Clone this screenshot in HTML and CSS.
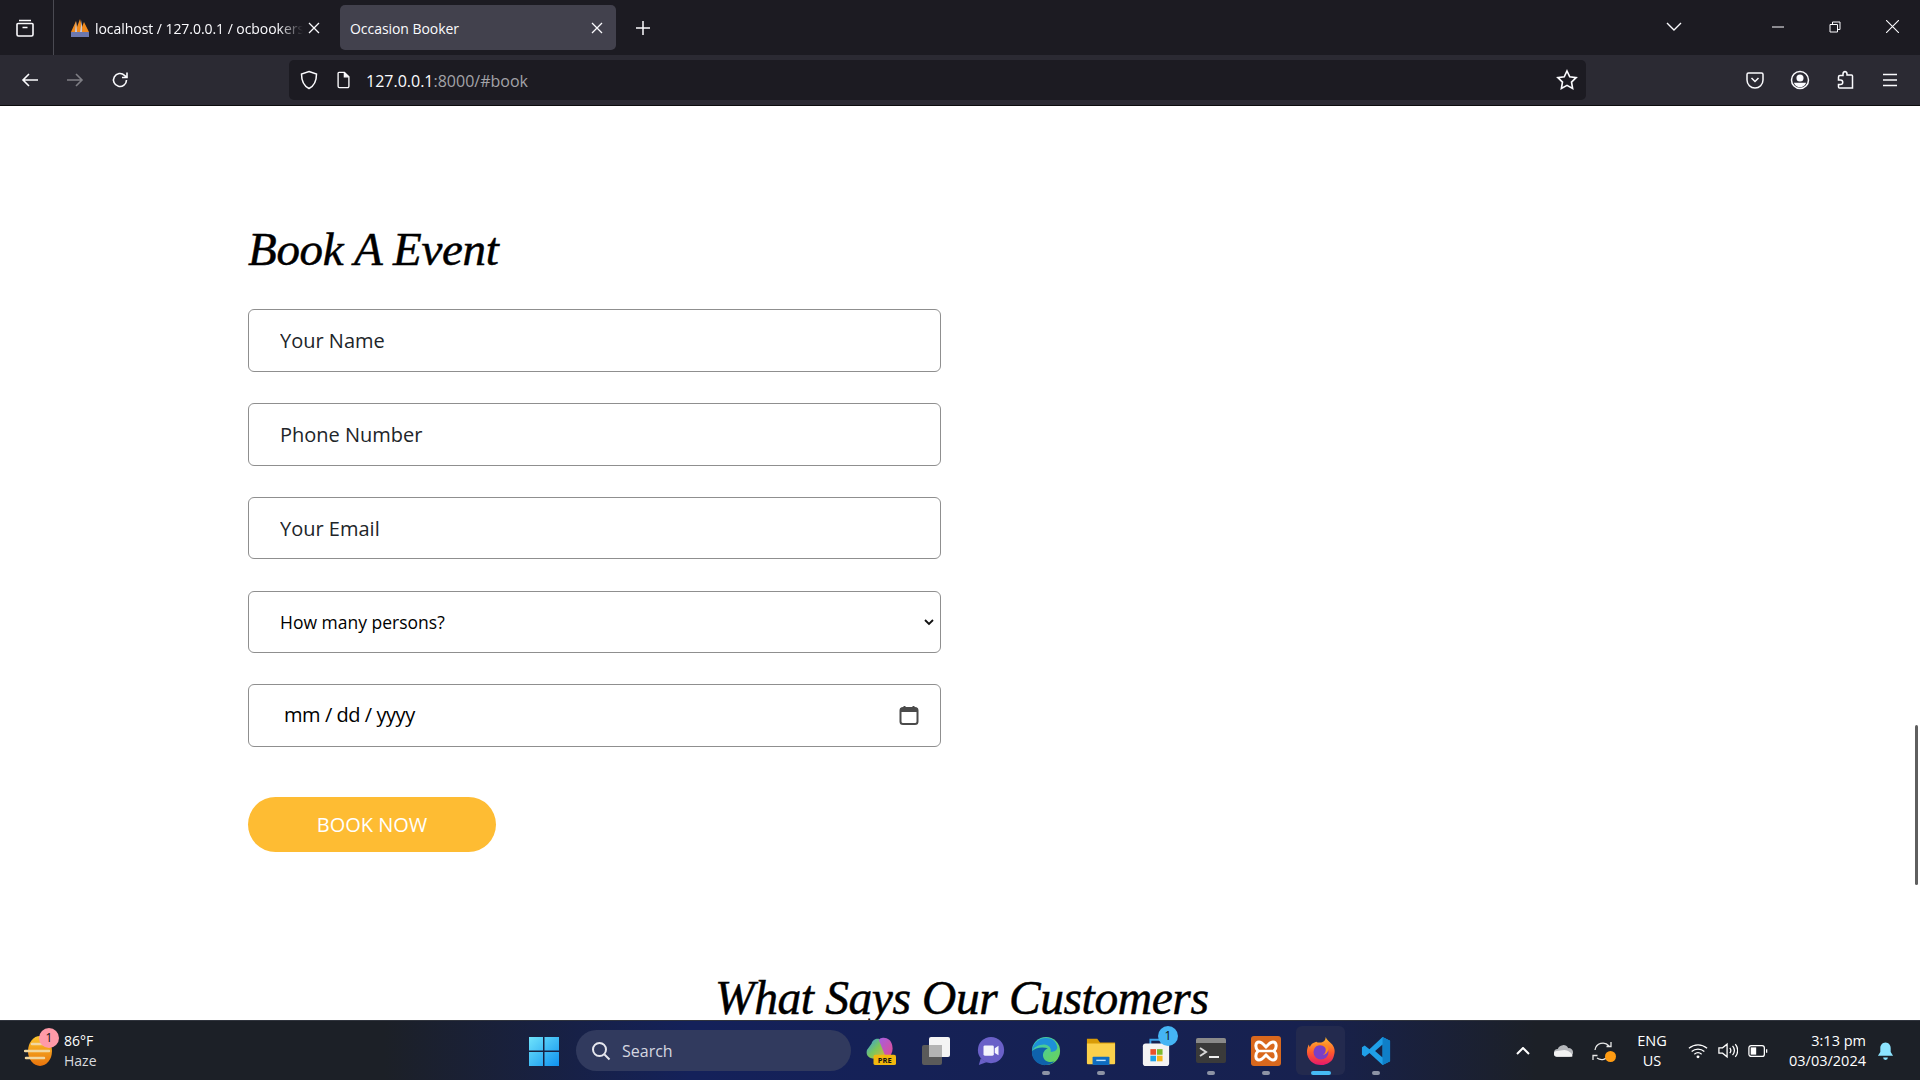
FILE: index.html
```html
<!DOCTYPE html>
<html lang="en">
<head>
<meta charset="utf-8">
<title>Occasion Booker</title>
<link rel="stylesheet" href="styles.css">
</head>
<body>
<div class="screen">
  <header class="tabstrip">
    <div class="tabview">
      <svg class="ico" viewBox="0 0 20 20"><path d="M4 2.500h12M3 5.500h14a1 1 0 0 1 1 1v10a1.500 1.500 0 0 1-1.500 1.500h-13A1.500 1.500 0 0 1 2 16.500v-10a1 1 0 0 1 1-1zM7.500 9.500h5"/></svg>
    </div>
    <div class="tab first">
      <svg class="favicon" viewBox="0 0 20 20"><path d="M1 14 6 3l1 6 3-8 2 8 2-5 5 10z" fill="#f08a1d"/><path d="M1 14h18v5H1z" fill="#6c78af"/><path d="M6 3 5 14h2zM12 2l-2 12h2z" fill="#c9c9d6"/></svg>
      <span class="tabtitle fade">localhost / 127.0.0.1 / ocbookers</span>
      <svg class="close" viewBox="0 0 12 12"><path d="M1 1l10 10M11 1 1 11"/></svg>
    </div>
    <div class="tab active">
      <span class="tabtitle">Occasion Booker</span>
      <svg class="close" viewBox="0 0 12 12"><path d="M1 1l10 10M11 1 1 11"/></svg>
    </div>
    <svg class="newtab" viewBox="0 0 16 16"><path d="M8 1v14M1 8h14"/></svg>
    <div class="spacer"></div>
    <svg class="tablist" viewBox="0 0 16 10"><path d="M1 1l7 7 7-7"/></svg>
    <svg class="winbtn" viewBox="0 0 12 12"><path d="M0 6h12"/></svg>
    <svg class="winbtn" viewBox="0 0 12 12"><path d="M1 3.500h7.500V11H1zM3.500 3.500V1H11v7.500H8.500"/></svg>
    <svg class="winbtn lastbtn" viewBox="0 0 12 12"><path d="M0 0l12 12M12 0 0 12"/></svg>
  </header>

  <nav class="toolbar">
    <svg class="navico" viewBox="0 0 18 18"><path d="M17 9H2M8 3 2 9l6 6"/></svg>
    <svg class="navico dim" viewBox="0 0 18 18"><path d="M1 9h15M10 3l6 6-6 6"/></svg>
    <svg class="navico" viewBox="0 0 18 18"><path d="M15.500 9A6.500 6.500 0 1 1 13.500 4.300L16 6.500M16 1.500v5h-5"/></svg>
    <div class="urlbar">
      <svg class="urlico" viewBox="0 0 18 20"><path d="M9 1.500 16.500 4c0 7-1.500 11.500-7.500 14.500C3 15.500 1.500 11 1.500 4z"/></svg>
      <svg class="urlico docico" viewBox="0 0 16 20"><path d="M2 2.500a1 1 0 0 1 1-1h6l5 5v10.500a1.500 1.500 0 0 1-1.500 1.500h-9A1.500 1.500 0 0 1 2 17z"/><path d="M9 1.500v5h5" fill="#fbfbfe"/></svg>
      <span class="url"><span class="host">127.0.0.1</span>:8000/#book</span>
      <div class="spacer"></div>
      <svg class="star" viewBox="0 0 20 20"><path d="m10 1.800 2.500 5.300 5.800.8-4.200 4 1 5.800-5.100-2.800-5.100 2.800 1-5.800-4.200-4 5.800-.8z"/></svg>
    </div>
    <div class="spacer"></div>
    <svg class="toolico" viewBox="0 0 20 20"><path d="M3.500 3h13A1.500 1.500 0 0 1 18 4.500V10a8 8 0 0 1-16 0V4.500A1.500 1.500 0 0 1 3.500 3zM6.500 8l3.500 3.500L13.500 8"/></svg>
    <svg class="toolico" viewBox="0 0 20 20"><circle cx="10" cy="10" r="8.500"/><circle cx="10" cy="8" r="2.800" fill="#fbfbfe"/><path d="M5 13.500h10c-1 2-3 3-5 3s-4-1-5-3z" fill="#fbfbfe"/></svg>
    <svg class="toolico" viewBox="0 0 20 20"><path d="M9.500 1.500c1.500 0 2.500 1 2.500 2.500v1h4.500a1 1 0 0 1 1 1v12h-13a1 1 0 0 1-1-1v-2.500h2a2 2 0 0 0 0-4.500h-2V7a1.500 1.500 0 0 1 1.500-1.500h3V4c0-1.500.5-2.500 2.500-2.500z"/></svg>
    <svg class="toolico lasttool" viewBox="0 0 20 20"><path d="M3 4.500h14M3 10h14M3 15.500h14"/></svg>
  </nav>

  <main class="content">
    <section class="booking">
      <h2 class="script book-title">Book A Event</h2>
      <form class="form">
        <input class="field" type="text" placeholder="Your Name">
        <input class="field" type="text" placeholder="Phone Number">
        <input class="field shorter" type="email" placeholder="Your Email">
        <div class="field selectbox">
          <span>How many persons?</span>
          <svg class="chev" viewBox="0 0 10 7"><path d="M1 1l4 4 4-4"/></svg>
        </div>
        <div class="field datebox">
          <span>mm / dd / yyyy</span>
          <svg class="cal" viewBox="0 0 20 20"><rect x="1.500" y="3" width="17" height="16" rx="2.500" fill="none" stroke="#4a4a4a" stroke-width="2"/><path d="M1.500 3h17v4h-17z" fill="#4a4a4a"/><path d="M5.500 1v3M14.500 1v3" stroke="#4a4a4a" stroke-width="2"/></svg>
        </div>
        <button class="book-btn" type="button">BOOK NOW</button>
      </form>
    </section>
    <h2 class="script customers">What Says Our Customers</h2>
    <div class="scrollthumb"></div>
  </main>

  <footer class="taskbar">
    <div class="weather">
      <div class="sun">
        <svg viewBox="0 0 30 34" width="30" height="34"><defs><linearGradient id="sung" x1="0" y1="0" x2="0" y2="1"><stop offset="0" stop-color="#fcc52c"/><stop offset="1" stop-color="#e8730c"/></linearGradient></defs><ellipse cx="16" cy="17" rx="12" ry="15" fill="url(#sung)"/><path d="M8 10h16M1 17h24M2 24h18" stroke="#f1d7a0" stroke-width="2.500" stroke-linecap="round"/></svg>
        <span class="wbadge">1</span>
      </div>
      <div class="wtext"><span class="temp">86°F</span><span class="cond">Haze</span></div>
    </div>
    <div class="tile">
      <svg class="app" viewBox="0 0 30 30"><defs><linearGradient id="win" x1="0" y1="0" x2="1" y2="1"><stop offset="0" stop-color="#6fe3fb"/><stop offset="1" stop-color="#0f92ef"/></linearGradient></defs><path d="M0 1h14v13.500H0zM15.500 1H30v13.500H15.500zM0 16h14v14H0zM15.500 16H30v14H15.500z" fill="url(#win)"/></svg>
    </div>
    <div class="search">
      <svg class="searchico" viewBox="0 0 20 20"><circle cx="8.500" cy="8.500" r="6.500"/><path d="m13.500 13.500 5 5"/></svg>
      <span>Search</span>
    </div>
    <div class="apps">
      <div class="tile"><svg class="app" viewBox="0 0 32 32"><defs><linearGradient id="cop" x1="0" y1="0" x2="1" y2="1"><stop offset="0" stop-color="#2d9cf0"/><stop offset=".5" stop-color="#7cc65a"/><stop offset="1" stop-color="#e3b13a"/></linearGradient><linearGradient id="cop2" x1="0" y1="0" x2="1" y2="1"><stop offset="0" stop-color="#a45fe0"/><stop offset="1" stop-color="#e24d92"/></linearGradient></defs><path d="M6 8c1-5 8-7 10-3l5 15c-1 5-12 5-14 4-6-1-7-5-6-9z" fill="url(#cop)"/><path d="M17 2c5-1 10 2 11 8 1 4 0 9-3 12l-5-2-6-15c0-2 1-3 3-3z" fill="url(#cop2)"/><rect x="8" y="20" width="24" height="11" rx="2" fill="#f2b80e"/><text x="20" y="29" class="pre">PRE</text></svg></div>
      <div class="tile"><svg class="app" viewBox="0 0 30 30"><rect x="1" y="9" width="20" height="20" rx="2" fill="#5a5a5a"/><rect x="8" y="1" width="21" height="20" rx="2" fill="#f4f4f4"/><rect x="8" y="9" width="13" height="12" fill="#b4b4b4"/></svg></div>
      <div class="tile"><svg class="app" viewBox="0 0 30 32"><circle cx="15" cy="15" r="14" fill="#6a60c8"/><path d="M4 24 2 31l8-3z" fill="#6a60c8"/><rect x="7" y="10" width="11" height="11" rx="1.500" fill="#f4f4fc"/><path d="m19 13 4-2.500v10L19 18z" fill="#f4f4fc"/></svg></div>
      <div class="tile dot"><svg class="app" viewBox="0 0 32 32"><defs><linearGradient id="edge" x1="0" y1="0" x2="1" y2="1"><stop offset="0" stop-color="#36c8c0"/><stop offset="1" stop-color="#70d44e"/></linearGradient></defs><circle cx="16" cy="16" r="15" fill="url(#edge)"/><path d="M1 16C2 7 9 2 16 2c6 0 11 3 12 10 0 3-3 5-7 5 1-4-2-8-7-8-6 0-11 3-13 7z" fill="#1e90d8"/><path d="M1 16c-1 9 7 16 15 15 4 0 7-2 9-4-5 2-11 0-12-5-1-4 2-8 5-9-7-2-14 0-17 3z" fill="#0f62ac"/></svg></div>
      <div class="tile dot"><svg class="app" viewBox="0 0 32 30"><path d="M1 2h11l3 4h16v22H1z" fill="#d99c07"/><path d="M1 7h30v21a1 1 0 0 1-1 1H2a1 1 0 0 1-1-1z" fill="#fbd04b"/><rect x="7" y="21" width="18" height="9" rx="1" fill="#0f6cc0"/><path d="M11 25h10" stroke="#bfe3ff" stroke-width="1.500"/></svg></div>
      <div class="tile badge-host"><svg class="app" viewBox="0 0 30 32"><path d="M9 9V4h12v5" fill="none" stroke="#3aa0e8" stroke-width="2"/><rect x="1" y="8" width="28" height="24" rx="3" fill="#f3f3f3"/><path d="M9 14h6v6H9z" fill="#e9512c"/><path d="M16 14h6v6h-6z" fill="#7dbb2e"/><path d="M9 21h6v6H9z" fill="#1ea3e8"/><path d="M16 21h6v6h-6z" fill="#f6b81c"/></svg><span class="appbadge">1</span></div>
      <div class="tile dot"><svg class="app" viewBox="0 0 30 26"><rect x="0" y="0" width="30" height="25" rx="2" fill="#3a3a3a"/><path d="M0 2a2 2 0 0 1 2-2h26a2 2 0 0 1 2 2v3H0z" fill="#8a8a8a"/><path d="m4 10 6 4-6 4" fill="none" stroke="#d8d8d8" stroke-width="2"/><path d="M13 19h10" stroke="#eee" stroke-width="2"/></svg></div>
      <div class="tile dot"><svg class="app" viewBox="0 0 30 30"><rect width="30" height="30" rx="3" fill="#d9681d"/><path d="M8 6c3 0 5 3 7 5 2-2 4-5 7-5 4 0 4 6 1 9 3 3 3 9-1 9-3 0-5-3-7-5-2 2-4 5-7 5-4 0-4-6-1-9-3-3-3-9 1-9z" fill="none" stroke="#fff" stroke-width="3"/><path d="M7 15h16" stroke="#fff" stroke-width="2.500"/></svg></div>
      <div class="tile running"><svg class="app ff" viewBox="0 0 32 32"><defs><linearGradient id="ffg" x1="0" y1="0" x2="0" y2="1"><stop offset="0" stop-color="#ffbc2f"/><stop offset=".55" stop-color="#ff5a2c"/><stop offset="1" stop-color="#e6186d"/></linearGradient></defs><path d="M21 1c1 3 4 5 7 8 3 4 3 8 2 11-1 7-7 11-14 11C8 31 1 25 1 17c0-3 1-6 2-8l1 3c1-3 3-5 7-6 1 1 2 1 4 1 3 0 6-2 6-6z" fill="url(#ffg)"/><circle cx="16" cy="17" r="8" fill="#7a3fc7"/><path d="M9 12c3-3 9-3 11 0 2 2 1 7-2 8 3 0 6-3 6-7-2-5-12-7-15-1z" fill="#ff8a1f"/></svg></div>
      <div class="tile dot"><svg class="app" viewBox="0 0 32 32"><path d="M23 1 31 5v22l-8 4L9 18l-5 4-3-2v-8l3-2 5 4zM23 9l-8 7 8 7z" fill="#1f9fe8"/><path d="M23 1 31 5v22l-8 4z" fill="#0f7fc8"/></svg></div>
    </div>
    <div class="tray">
      <svg class="tchev" viewBox="0 0 14 8"><path d="M1 7l6-6 6 6"/></svg>
      <svg class="cloud" viewBox="0 0 22 14"><path d="M5 13a4 4 0 0 1 0-8 6 6 0 0 1 11-1 4.500 4.500 0 0 1 1 9z" fill="#b5b7bb"/><path d="M4 13a3 3 0 0 1 0-6l8-1c3 0 8 3 8 5 1 2 0 2-1 2z" fill="#f2f2f2"/></svg>
      <div class="sync">
        <svg viewBox="0 0 22 22" width="22" height="22"><path d="M3 10a8 8 0 0 1 14-4M19 2v4.500h-4.500M17 15a8 8 0 0 1-12 3M1 20v-4.500h4.500"/></svg>
        <span class="syncdot"></span>
      </div>
      <div class="lang"><span>ENG</span><span>US</span></div>
      <svg class="wifi" viewBox="0 0 22 18"><path d="M1 6.500c6-5 14-5 20 0M4 10c4-3.500 10-3.500 14 0M7 13c2.500-2 5.500-2 8 0"/><circle cx="11" cy="16" r="1.600" fill="#fff" stroke="none"/></svg>
      <svg class="vol" viewBox="0 0 22 18"><path d="M1 6h4l5-4v14l-5-4H1zM13 6c1.500 2 1.500 4 0 6M16 4c2.500 3 2.500 7 0 10M19 2c3.500 4 3.500 10 0 14"/></svg>
      <svg class="batt" viewBox="0 0 22 14"><rect x="1" y="1" width="17" height="12" rx="2.500"/><rect x="3" y="3" width="6" height="8" fill="#fff" stroke="none"/><path d="M20.500 5v4"/></svg>
      <div class="clock"><span>3:13 pm</span><span>03/03/2024</span></div>
      <svg class="bell" viewBox="0 0 18 20"><path d="M9 1c3.500 0 5.500 3 5.500 6v4l2.500 4H1l2.500-4V7C3.500 4 5.500 1 9 1z" fill="#8ce4ff"/><path d="M6.500 17h5a2.500 2.500 0 0 1-5 0z" fill="#8ce4ff"/></svg>
    </div>
  </footer>
</div>
</body>
</html>
```

FILE: styles.css
```css
* { box-sizing: border-box; }
html, body { margin: 0; padding: 0; height: 100%; overflow: hidden; }
body { font-family: "Open Sans", "Noto Sans", sans-serif; background: #fff; }
.screen { width: 1920px; height: 1080px; display: flex; flex-direction: column; overflow: hidden; }
.spacer { flex: 1; }
svg { display: block; flex: none; }

/* tab strip */
.tabstrip { height: 55px; flex: none; background: #1c1b22; display: flex; align-items: center; color: #fbfbfe; font-size: 14px; }
.tabview { width: 54px; height: 55px; flex: none; display: flex; align-items: center; justify-content: center; border-right: 1px solid #4a4a52; }
.ico { width: 20px; height: 20px; fill: none; stroke: #fbfbfe; stroke-width: 1.6; margin-right: 3px; }
.tab { width: 276px; height: 45px; margin-right: 7px; padding: 0 10px 0 16px; flex: none; display: flex; align-items: center; gap: 5px; border-radius: 5px; }
.tab.first { width: 279px; }
.tab.active { background: #42414d; padding-left: 10px; }
.favicon { width: 20px; height: 20px; }
.tabtitle { flex: 1; white-space: nowrap; overflow: hidden; font-size: 14px; letter-spacing: -.05px; position: relative; top: 1px; }
.fade { -webkit-mask-image: linear-gradient(90deg, #000 88%, transparent); mask-image: linear-gradient(90deg, #000 88%, transparent); }
.close { width: 12px; height: 12px; fill: none; stroke: #fbfbfe; stroke-width: 1.3; margin-right: 3px; }
.newtab { width: 16px; height: 16px; fill: none; stroke: #fbfbfe; stroke-width: 1.5; margin-left: 12px; }
.tablist { width: 16px; height: 10px; fill: none; stroke: #fbfbfe; stroke-width: 1.4; margin-right: 90px; position: relative; top: -1px; }
.winbtn { width: 12px; height: 12px; fill: none; stroke: #fbfbfe; stroke-width: 1; margin-right: 45px; position: relative; top: -1px; }
.winbtn.lastbtn { margin-right: 21px; width: 13px; height: 13px; }

/* toolbar */
.toolbar { height: 51px; flex: none; background: #2b2a33; border-bottom: 1px solid #0c0c0d; display: flex; align-items: center; padding-left: 21px; }
.navico { width: 18px; height: 18px; fill: none; stroke: #fbfbfe; stroke-width: 1.6; margin-right: 27px; }
.dim { opacity: .4; }
.urlbar { width: 1297px; height: 40px; margin-left: 133px; flex: none; background: #1c1b22; border-radius: 5px; display: flex; align-items: center; padding: 0 8px 0 11px; color: #fbfbfe; }
.urlico { width: 18px; height: 20px; fill: none; stroke: #fbfbfe; stroke-width: 1.5; margin-right: 18px; }
.urlico.docico { width: 15px; height: 18px; margin-right: 15px; }
.url { font-size: 16px; color: #a3a3a8; position: relative; top: 1px; }
.host { color: #fbfbfe; }
.star { width: 22px; height: 22px; fill: none; stroke: #fbfbfe; stroke-width: 1.5; }
.toolico { width: 20px; height: 20px; fill: none; stroke: #fbfbfe; stroke-width: 1.5; margin-right: 25px; }
.toolico.lasttool { margin-right: 20px; }

/* page */
.content { flex: 1; min-height: 0; background: #fff; position: relative; overflow: hidden; }
.booking { padding: 113px 0 0 248px; }
.script { margin: 0; font-family: "Liberation Serif", serif; font-style: italic; font-weight: 400; color: #000; -webkit-text-stroke: .5px #000; }
.book-title { font-size: 47px; line-height: 60px; letter-spacing: -.3px; }
.form { width: 693px; margin-top: 30px; display: flex; flex-direction: column; align-items: flex-start; }
.field { width: 100%; height: 63px; margin-bottom: 31px; border: 1px solid #8f8f8f; border-radius: 6px; background: #fff; padding: 0 31px; font-family: "Open Sans", sans-serif; font-size: 20px; color: #212529; outline: none; }
.field::placeholder { color: #212529; opacity: 1; }
.field.shorter { height: 62px; margin-bottom: 32px; }
.selectbox { display: flex; align-items: center; justify-content: space-between; height: 62px; font-size: 17.500px; color: #000; padding-right: 6px; }
.datebox { display: flex; align-items: center; justify-content: space-between; height: 63px; margin-bottom: 50px; color: #000; padding: 0 21px 2px 35px; letter-spacing: -.45px; }
.chev { width: 10px; height: 7px; fill: none; stroke: #111; stroke-width: 1.8; }
.cal { width: 20px; height: 20px; }
.book-btn { width: 248px; height: 55px; border: 0; border-radius: 28px; background: #febc33; color: #fff; font-family: "Open Sans", sans-serif; font-size: 20px; }
.customers { position: absolute; left: 715px; top: 862px; font-size: 47.500px; line-height: 60px; white-space: nowrap; letter-spacing: -.4px; }
.scrollthumb { position: absolute; right: 2px; top: 619px; width: 3px; height: 160px; background: #5f5f5f; border-radius: 2px; }

/* taskbar */
.taskbar { height: 60px; flex: none; border-top: 1px solid #30343d; background: linear-gradient(90deg, #1c2027 0, #1c2027 20%, #14215a 36%, #17214f 68%, #1c2027 80%, #1c2027 100%); display: flex; align-items: center; color: #fff; }
.weather { width: 516px; flex: none; display: flex; align-items: center; padding-left: 24px; gap: 10px; }
.sun { position: relative; width: 30px; height: 34px; }
.wbadge { position: absolute; top: -6px; left: 15px; width: 20px; height: 20px; border-radius: 50%; background: #ff9aa8; color: #111; font-size: 12px; line-height: 20px; text-align: center; }
.wtext { display: flex; flex-direction: column; font-size: 14px; line-height: 20px; }
.cond { color: #d8dade; }
.tile { position: relative; width: 55px; height: 49px; flex: none; display: flex; align-items: center; justify-content: center; }
.app { width: 30px; height: 30px; }
.pre { font: 700 8px "Open Sans", sans-serif; fill: #111; text-anchor: middle; }
.search { width: 275px; height: 41px; margin-left: 5px; margin-right: 3px; flex: none; border-radius: 21px; background: #313a5e; display: flex; align-items: center; gap: 11px; padding-left: 15px; font-size: 16px; color: #d5d7e0; }
.searchico { width: 20px; height: 20px; fill: none; stroke: #e6e7ee; stroke-width: 2; }
.apps { display: flex; margin-left: -1px; }
.dot::after, .running::after { content: ""; position: absolute; bottom: 0; left: 50%; width: 8px; height: 4px; margin-left: -4px; border-radius: 2px; background: #8d93a5; }
.tile.running { width: 49px; margin: 0 3px; background: #232a4e; border-radius: 6px; }
.running::after { width: 20px; margin-left: -10px; background: #46baf5; }
.badge-host .appbadge { position: absolute; top: 0; left: 30px; width: 20px; height: 20px; border-radius: 50%; background: #45b5f4; color: #111; font-size: 12px; line-height: 20px; text-align: center; }
.tray { margin-left: auto; display: flex; align-items: center; font-size: 15px; }
.tchev { width: 14px; height: 8px; fill: none; stroke: #fff; stroke-width: 2; margin-right: 23px; }
.cloud { width: 21px; height: 14px; margin-right: 18px; }
.sync { position: relative; width: 22px; height: 22px; margin-right: 22px; }
.sync svg { fill: none; stroke: #e8e8e8; stroke-width: 1.3; }
.syncdot { position: absolute; right: -2px; bottom: 0; width: 11px; height: 11px; border-radius: 50%; background: #ff9c13; }
.lang { display: flex; flex-direction: column; align-items: center; width: 32px; line-height: 20px; font-size: 14.500px; margin-right: 20px; }
.wifi, .vol { width: 20px; height: 17px; fill: none; stroke: #fff; stroke-width: 1.4; margin-right: 10px; }
.batt { width: 20px; height: 14px; fill: none; stroke: #fff; stroke-width: 1.4; margin-right: 10px; }
.clock { width: 88px; display: flex; flex-direction: column; align-items: flex-end; line-height: 20px; font-size: 14.500px; white-space: nowrap; margin-right: 11px; }
.bell { width: 17px; height: 20px; margin-right: 26px; }
```
